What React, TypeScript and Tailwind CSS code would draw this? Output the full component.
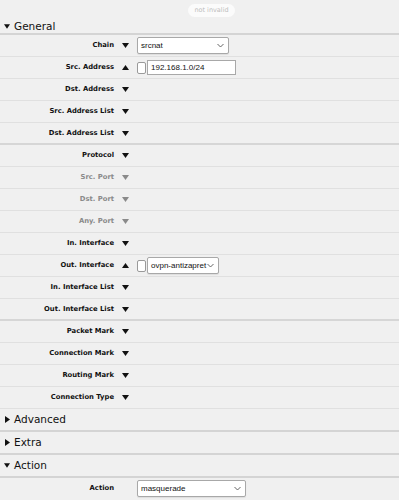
import React from "react";

const Down = ({ gray }: { gray?: boolean }) => (
  <svg width="7" height="5" viewBox="0 0 7 5"><polygon points="0,0 7,0 3.5,5" fill={gray ? "#8a8a8a" : "#111"} /></svg>
);
const Up = () => (
  <svg width="7" height="5" viewBox="0 0 7 5"><polygon points="0,5 7,5 3.5,0" fill="#111" /></svg>
);
const Right = () => (
  <svg width="5" height="7" viewBox="0 0 5 7"><polygon points="0,0 5,3.5 0,7" fill="#111" /></svg>
);
const Chev = () => (
  <svg width="7" height="5" viewBox="0 0 7 5"><polyline points="0.5,1 3.5,4 6.5,1" fill="none" stroke="#555" strokeWidth="0.9" /></svg>
);

const Select = ({ w, text }: { w: string; text: string }) => (
  <div className={`${w} h-[17px] bg-white border border-[#a8a8a8] rounded-[2px] flex items-center justify-between pl-[3px] pr-[4px] text-[8px] text-[#111] shadow-[0_1px_1px_rgba(0,0,0,0.08)]`} style={{ fontFamily: '"Liberation Sans", Arial, sans-serif' }}>
    <span>{text}</span>
    <Chev />
  </div>
);

const Check = () => <div className="w-[9px] h-[12px] bg-white border border-[#9a9a9a] rounded-[2px]" />;

type Row = { label: string; gray?: boolean; up?: boolean; control?: React.ReactNode; group?: boolean };

const RowEl = ({ r }: { r: Row }) => (
  <div className={`h-[22px] flex items-center ${r.group ? "border-b-2 border-[#d6d6d6]" : "border-b border-[#e0e0e0]"}`}>
    <div className={`w-[114px] text-right font-bold text-[6.8px] ${r.gray ? "text-[#8a8a8a]" : "text-[#111]"}`} style={{ fontFamily: '"DejaVu Sans", Verdana, sans-serif' }}>{r.label}</div>
    <div className="w-[23px] flex justify-center">{r.up ? <Up /> : <Down gray={r.gray} />}</div>
    {r.control}
  </div>
);

const Header = ({ title, open, h }: { title: string; open?: boolean; h: string }) => (
  <div className={`${h} flex items-center pl-[4px] gap-[4px] border-b-2 border-[#d4d4d4] text-[10.5px] text-[#111]`} style={{ fontFamily: '"DejaVu Sans", Verdana, sans-serif' }}>
    <div className="w-[6px] flex justify-center">{open ? <Down /> : <Right />}</div>
    <span>{title}</span>
  </div>
);

export default function App() {
  const rows: Row[] = [
    { label: "Chain", control: <Select w="w-[92px]" text="srcnat" /> },
    {
      label: "Src. Address", up: true, control: (
        <div className="flex items-center gap-[1px]">
          <Check />
          <div className="w-[89px] h-[15px] bg-white border border-[#a8a8a8] flex items-center pl-[3px] text-[8px] text-[#111]" style={{ fontFamily: '"Liberation Sans", Arial, sans-serif' }}>192.168.1.0/24</div>
        </div>
      ),
    },
    { label: "Dst. Address" },
    { label: "Src. Address List" },
    { label: "Dst. Address List", group: true },
    { label: "Protocol" },
    { label: "Src. Port", gray: true },
    { label: "Dst. Port", gray: true },
    { label: "Any. Port", gray: true },
    { label: "In. Interface" },
    {
      label: "Out. Interface", up: true, control: (
        <div className="flex items-center gap-[1px]">
          <Check />
          <Select w="w-[72px]" text="ovpn-antizapret" />
        </div>
      ),
    },
    { label: "In. Interface List" },
    { label: "Out. Interface List", group: true },
    { label: "Packet Mark" },
    { label: "Connection Mark" },
    { label: "Routing Mark" },
    { label: "Connection Type" },
  ];
  return (
    <div className="w-[399px] h-[500px] bg-[#f0f0f0] overflow-hidden">
      <div className="h-[20px] flex justify-center pt-[4px]">
        <div className="ml-[24px] h-[13px] px-[6px] rounded-full bg-[#fbfbfb] text-[6.5px] text-[#bdbdbd] flex items-center" style={{ fontFamily: '"DejaVu Sans", Verdana, sans-serif' }}>not invalid</div>
      </div>
      <Header title="General" open h="h-[15px]" />
      {rows.map((r, i) => <RowEl key={i} r={r} />)}
      <Header title="Advanced" h="h-[23px]" />
      <Header title="Extra" h="h-[23px]" />
      <Header title="Action" open h="h-[23px]" />
      <div className="h-[21px] flex items-center">
        <div className="w-[114px] text-right font-bold text-[6.8px] text-[#111]" style={{ fontFamily: '"DejaVu Sans", Verdana, sans-serif' }}>Action</div>
        <div className="w-[23px]" />
        <Select w="w-[109px]" text="masquerade" />
      </div>
    </div>
  );
}
